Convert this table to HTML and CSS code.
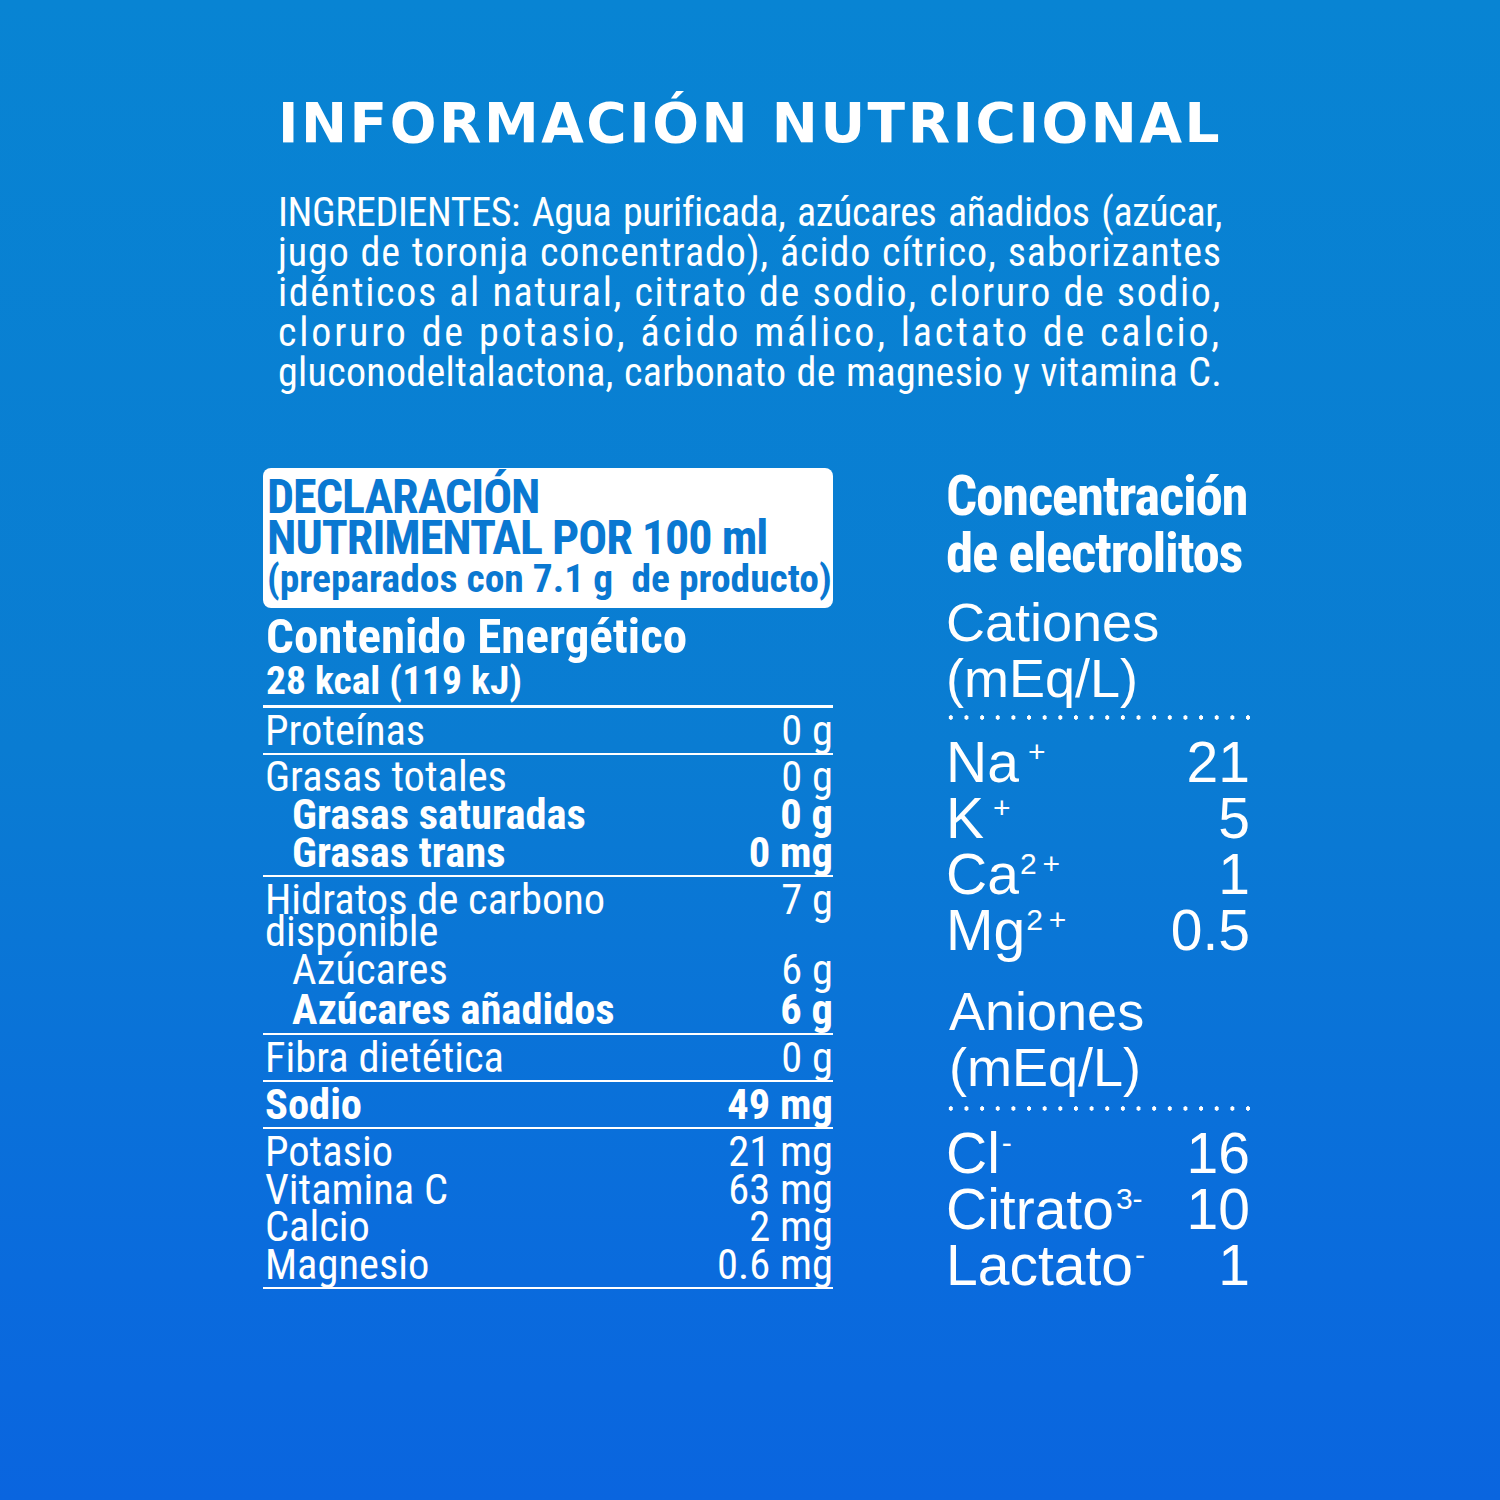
FILE: index.html
```html
<!DOCTYPE html>
<html lang="es">
<head>
<meta charset="utf-8">
<title>Información nutricional</title>
<link rel="stylesheet" href="styles.css">
</head>
<body>
<main class="page">
  <h1 class="title">INFORMACIÓN NUTRICIONAL</h1>
  <div class="ingredients">
    <div class="ing-line l1"><span class="ing-label">INGREDIENTES:</span> Agua purificada, azúcares añadidos (azúcar,</div>
    <div class="ing-line l2">jugo de toronja concentrado), ácido cítrico, saborizantes</div>
    <div class="ing-line l3">idénticos al natural, citrato de sodio, cloruro de sodio,</div>
    <div class="ing-line l4">cloruro de potasio, ácido málico, lactato de calcio,</div>
    <div class="ing-line l5">gluconodeltalactona, carbonato de magnesio y vitamina C.</div>
  </div>

  <div class="panels">
    <section class="nutri">
      <div class="nutri-head">
        <div class="nh-big">DECLARACIÓN</div>
        <div class="nh-big">NUTRIMENTAL POR 100 ml</div>
        <div class="nh-small">(preparados con 7.1 g&nbsp; de producto)</div>
      </div>
      <div class="energy">
        <div class="en-title">Contenido Energético</div>
        <div class="en-value">28 kcal (119 kJ)</div>
      </div>
      <div class="group single">
        <div class="row"><span>Proteínas</span><span>0 g</span></div>
      </div>
      <div class="group">
        <div class="row"><span>Grasas totales</span><span>0 g</span></div>
        <div class="row sub bold"><span>Grasas saturadas</span><span>0 g</span></div>
        <div class="row sub bold"><span>Grasas trans</span><span>0 mg</span></div>
      </div>
      <div class="group">
        <div class="row tight"><span>Hidratos de carbono<br>disponible</span><span>7 g</span></div>
        <div class="row sub loose"><span>Azúcares</span><span>6 g</span></div>
        <div class="row sub bold loose"><span>Azúcares añadidos</span><span>6 g</span></div>
      </div>
      <div class="group single">
        <div class="row"><span>Fibra dietética</span><span>0 g</span></div>
      </div>
      <div class="group single">
        <div class="row bold"><span>Sodio</span><span>49 mg</span></div>
      </div>
      <div class="group minerals">
        <div class="row"><span>Potasio</span><span>21 mg</span></div>
        <div class="row"><span>Vitamina C</span><span>63 mg</span></div>
        <div class="row"><span>Calcio</span><span>2 mg</span></div>
        <div class="row"><span>Magnesio</span><span>0.6 mg</span></div>
      </div>
    </section>

    <section class="electro">
      <h2 class="el-title">Concentración<br>de electrolitos</h2>
      <div class="el-head">Cationes<br>(mEq/L)</div>
      <div class="dots"></div>
      <div class="el-row"><span>Na<sup class="ion">+</sup></span><span>21</span></div>
      <div class="el-row"><span>K<sup class="ion">+</sup></span><span>5</span></div>
      <div class="el-row"><span>Ca<sup class="ion two">2+</sup></span><span>1</span></div>
      <div class="el-row"><span>Mg<sup class="ion two">2+</sup></span><span>0.5</span></div>
      <div class="el-head anions">Aniones<br>(mEq/L)</div>
      <div class="dots lower"></div>
      <div class="el-row"><span>Cl<sup class="ion tight">-</sup></span><span>16</span></div>
      <div class="el-row"><span>Citrato<sup class="ion tight">3-</sup></span><span>10</span></div>
      <div class="el-row"><span>Lactato<sup class="ion tight">-</sup></span><span>1</span></div>
    </section>
  </div>
</main>
</body>
</html>
```

FILE: styles.css
```css
* { box-sizing: border-box; margin: 0; padding: 0; }

html, body { width: 1500px; height: 1500px; }

body {
  background: linear-gradient(180deg, #0884d3 0%, #0a7cd2 50%, #0a6bdd 85%, #0a65df 100%);
  color: #ffffff;
  font-family: "Roboto Condensed", "Liberation Sans Narrow", "DejaVu Sans Condensed", "Liberation Sans", sans-serif;
}

.page {
  padding-top: 93px;
}

.title {
  margin-left: 278px;
  width: 960px;
  font-family: "DejaVu Sans", "Liberation Sans", sans-serif;
  font-weight: 700;
  font-size: 55px;
  line-height: 60px;
  letter-spacing: 2.55px;
  white-space: nowrap;
}

.ingredients {
  margin-left: 278px;
  margin-top: 40px;
  width: 944px;
  font-size: 40px;
  line-height: 40px;
}

.ing-line {
  text-align: justify;
  text-align-last: justify;
  white-space: nowrap;
}

.ing-line.l1 { letter-spacing: -0.4px; word-spacing: -2px; }
.ing-line.l2 { letter-spacing: 0.9px; }
.ing-line.l3 { letter-spacing: 1.65px; }
.ing-line.l4 { letter-spacing: 2.8px; }
.ing-line.l5 { letter-spacing: 0.3px; }

.panels {
  margin-left: 263px;
  margin-top: 75px;
  display: flex;
  gap: 113px;
  align-items: flex-start;
}

.nutri {
  width: 570px;
}

.nutri-head {
  background: #ffffff;
  color: #0a78d1;
  border-radius: 8px;
  padding: 8px 3px 8px 4px;
  font-weight: 700;
}

.nh-big {
  font-size: 48px;
  line-height: 41px;
  letter-spacing: -1px;
}

.nh-small {
  font-size: 39.5px;
  line-height: 42px;
  white-space: nowrap;
}

.energy {
  padding: 5px 3px 4px;
  border-bottom: 3px solid #ffffff;
  font-weight: 700;
}

.en-title {
  font-size: 49px;
  line-height: 48px;
}

.en-value {
  font-size: 39.5px;
  line-height: 40px;
}

.group {
  border-bottom: 2px solid #ffffff;
  padding: 3px 0 3px 2px;
}

.group.single {
  padding: 4px 0 3px 2px;
}

.row {
  display: flex;
  justify-content: space-between;
  align-items: flex-start;
  font-size: 42.5px;
  line-height: 38px;
}

.row.bold { font-weight: 700; }

.row.sub { padding-left: 27px; }

.row.tight { line-height: 32px; padding-top: 4px; padding-bottom: 2px; }

.row.loose { line-height: 40px; }

.group.minerals { padding: 4px 0 4px 2px; }

.minerals .row { line-height: 37.5px; }

.electro {
  width: 304px;
}

.el-title {
  font-weight: 700;
  font-size: 55px;
  line-height: 57px;
  letter-spacing: -1.3px;
  white-space: nowrap;
}

.el-head {
  font-family: "Liberation Sans", Arial, sans-serif;
  font-weight: 400;
  font-size: 54px;
  line-height: 56px;
  margin-top: 12px;
}

.el-head.anions {
  margin-top: 25px;
  padding-left: 3px;
}

.dots {
  height: 5px;
  margin: 9px 0 14px 0;
  background-image: radial-gradient(circle, #ffffff 2px, transparent 2.4px);
  background-size: 15.65px 5px;
  background-position: -3px 0;
  background-repeat: repeat-x;
}

.dots.lower {
  margin-top: 11px;
}

.el-row {
  display: flex;
  justify-content: space-between;
  font-family: "Liberation Sans", Arial, sans-serif;
  font-size: 57px;
  line-height: 56px;
}

.ion {
  font-size: 30px;
  vertical-align: 20px;
  line-height: 0;
  margin-left: 9px;
}

.ion.two {
  margin-left: 1px;
  letter-spacing: 6px;
}

.ion.tight { margin-left: 2px; }
```
